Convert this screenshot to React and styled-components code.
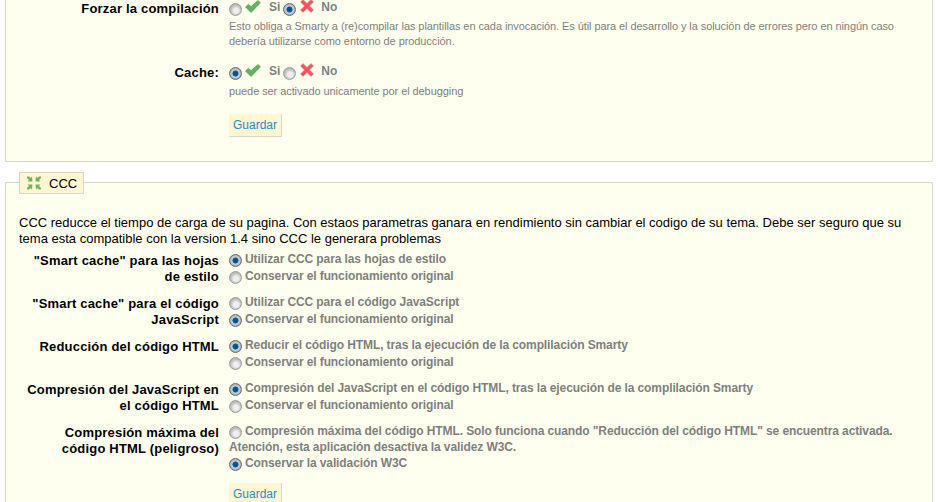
import React from "react";
import styled, { createGlobalStyle } from "styled-components";

const GlobalStyle = createGlobalStyle`
  html, body {
    margin: 0;
    padding: 0;
    height: 502px;
    overflow: hidden;
    background: #fff;
    font-family: "Liberation Sans", Arial, sans-serif;
  }
`;

const Page = styled.div`
  padding: 0 7px 0 5px;
`;

const Panel = styled.div`
  position: relative;
  background: #fffff0;
  border: 1px solid #dfd5c3;
  border-top: ${({ $cut }) => ($cut ? "0" : "1px solid #dfd5c3")};
  margin-top: ${({ $cut }) => ($cut ? "0" : "20px")};
  padding: ${({ $cut }) => ($cut ? "1px 0 15px" : "32px 13px 0")};
`;

const Legend = styled.div`
  position: absolute;
  top: -11px;
  left: 13px;
  height: 20px;
  display: flex;
  align-items: center;
  gap: 7px;
  padding: 0 6px;
  background: #fff6d3;
  border: 1px solid #dfd5c3;
  font-size: 13px;
  color: #000;
`;

const Intro = styled.p`
  margin: 0 0 4px;
  font-size: 13px;
  line-height: 16px;
  color: #000;
`;

const Row = styled.div`
  display: flex;
  gap: 10px;
  margin-bottom: ${({ $gap }) => $gap ?? 9}px;
`;

const Label = styled.label`
  flex: 0 0 ${({ $wide }) => ($wide ? 213 : 200)}px;
  box-sizing: border-box;
  padding-top: ${({ $top }) => $top ?? 2}px;
  text-align: right;
  font-size: 13px;
  font-weight: bold;
  line-height: 16px;
  letter-spacing: 0.19px;
  color: #000;
`;

const Field = styled.div`
  flex: 1;
  min-width: 0;
`;

const Toggle = styled.div`
  display: flex;
  align-items: center;
  height: 16px;
  font-size: 12px;
  font-weight: bold;
  color: #7f7f7f;
`;

const Option = styled.div`
  font-size: 12px;
  font-weight: bold;
  line-height: 16px;
  letter-spacing: -0.1px;
  color: #7f7f7f;
  min-height: 17px;
`;

const Radio = styled.input.attrs({ type: "radio" })`
  appearance: none;
  width: 13px;
  height: 13px;
  margin: 0 3px 0 0;
  vertical-align: -4px;
  border-radius: 50%;
  border: 1px solid #9a9da0;
  background: radial-gradient(circle at 55% 60%, #efefef 0 2.5px, #d2d2d2 4px, #b8b8b8 6px);
  box-sizing: border-box;
  flex: none;

  &:checked {
    background: radial-gradient(circle, #0b4f86 0 2px, #1c78b4 2.8px, #cfd4d8 3.4px, #a9aeb2 5.5px);
    border-color: #666c72;
  }
`;

const Mark = styled.svg`
  flex: none;
  display: block;
  margin: ${({ $margin }) => $margin};
`;

const Word = styled.span`
  margin-top: -5px;
  margin-right: ${({ $right }) => $right}px;
`;

const Hint = styled.p`
  margin: ${({ $top }) => $top}px 0 0;
  font-size: 11px;
  line-height: 15px;
  letter-spacing: -0.08px;
  color: #7f7f7f;
`;

const SaveButton = styled.button`
  display: block;
  width: 53px;
  height: 23px;
  padding: 0;
  background: #fff6d3;
  border: 0;
  border-right: 1px solid #dfd5c3;
  border-bottom: 1px solid #dfd5c3;
  font-family: inherit;
  font-size: 12px;
  color: #268ccd;
`;

const CheckIcon = () => (
  <Mark width="16" height="13" viewBox="0 0 16 13" $margin="-5px 8px 0 0">
    <path d="M0.5 7 L3.5 4.2 L6 6.6 L13 0.5 L15.5 2.8 L6 12.5 Z" fill="#60b45c" stroke="#4b9a4e" strokeWidth="0.6" />
  </Mark>
);

const CrossIcon = () => (
  <Mark width="14" height="14" viewBox="0 0 14 14" $margin="-6px 7px 0 1px">
    <path d="M0.5 3 L3 0.5 L7 4.5 L11 0.5 L13.5 3 L9.5 7 L13.5 11 L11 13.5 L7 9.5 L3 13.5 L0.5 11 L4.5 7 Z" fill="#f2525a" stroke="#f08a92" strokeWidth="0.6" />
  </Mark>
);

const CompressIcon = () => (
  <Mark width="16" height="14" viewBox="0 0 16 14">
    <g fill="#6cb562">
      <path d="M1 0.5 L3 0.5 L4.5 2 L6 0.5 L6.5 5.5 L1.5 5.5 L3 4 L1 2 Z" />
      <path d="M15 0.5 L13 0.5 L11.5 2 L10 0.5 L9.5 5.5 L14.5 5.5 L13 4 L15 2 Z" />
      <path d="M1 13.5 L3 13.5 L4.5 12 L6 13.5 L6.5 8.5 L1.5 8.5 L3 10 L1 12 Z" />
      <path d="M15 13.5 L13 13.5 L11.5 12 L10 13.5 L9.5 8.5 L14.5 8.5 L13 10 L15 12 Z" />
    </g>
  </Mark>
);

const YesNo = ({ name, yes }) => (
  <Toggle>
    <Radio name={name} defaultChecked={yes} />
    <CheckIcon />
    <Word $right={3}>Si</Word>
    <Radio name={name} defaultChecked={!yes} />
    <CrossIcon />
    <Word>No</Word>
  </Toggle>
);

const cccRows = [
  {
    name: "css",
    label: <>"Smart cache" para las hojas de estilo</>,
    options: ["Utilizar CCC para las hojas de estilo", "Conservar el funcionamiento original"],
    checked: 0,
  },
  {
    name: "js",
    label: <>"Smart cache" para el código JavaScript</>,
    options: ["Utilizar CCC para el código JavaScript", "Conservar el funcionamiento original"],
    checked: 1,
  },
  {
    name: "html",
    label: "Reducción del código HTML",
    options: ["Reducir el código HTML, tras la ejecución de la complilación Smarty", "Conservar el funcionamiento original"],
    checked: 0,
  },
  {
    name: "jsinline",
    label: "Compresión del JavaScript en el código HTML",
    options: ["Compresión del JavaScript en el código HTML, tras la ejecución de la complilación Smarty", "Conservar el funcionamiento original"],
    checked: 0,
  },
  {
    name: "w3c",
    label: "Compresión máxima del código HTML (peligroso)",
    options: [
      "Compresión máxima del código HTML. Solo funciona cuando \"Reducción del código HTML\" se encuentra activada. Atención, esta aplicación desactiva la validez W3C.",
      "Conservar la validación W3C",
    ],
    checked: 1,
    gap: 11,
  },
];

export default function App() {
  return (
    <Page>
      <GlobalStyle />
      <Panel $cut>
        <Row $gap={16}>
          <Label $wide $top={0}>Forzar la compilación</Label>
          <Field>
            <YesNo name="force" yes={false} />
            <Hint $top={2}>
              Esto obliga a Smarty a (re)compilar las plantillas en cada invocación. Es útil para el desarrollo y la solución de errores pero en ningún caso
              <br />
              debería utilizarse como entorno de producción.
            </Hint>
          </Field>
        </Row>
        <Row $gap={15}>
          <Label $wide $top={0}>Cache:</Label>
          <Field>
            <YesNo name="cache" yes />
            <Hint $top={3}>puede ser activado unicamente por el debugging</Hint>
          </Field>
        </Row>
        <Row>
          <Label $wide />
          <Field>
            <SaveButton>Guardar</SaveButton>
          </Field>
        </Row>
      </Panel>
      <Panel>
        <Legend>
          <CompressIcon />
          CCC
        </Legend>
        <Intro>
          CCC reducce el tiempo de carga de su pagina. Con estaos parametras ganara en rendimiento sin cambiar el codigo de su tema. Debe ser seguro que su tema esta compatible con la version 1.4 sino CCC le generara problemas
        </Intro>
        {cccRows.map((row) => (
          <Row key={row.name} $gap={row.gap}>
            <Label>{row.label}</Label>
            <Field>
              {row.options.map((text, i) => (
                <Option key={text}>
                  <Radio name={row.name} defaultChecked={i === row.checked} />
                  {text}
                </Option>
              ))}
            </Field>
          </Row>
        ))}
        <Row>
          <Label />
          <Field>
            <SaveButton>Guardar</SaveButton>
          </Field>
        </Row>
      </Panel>
    </Page>
  );
}
